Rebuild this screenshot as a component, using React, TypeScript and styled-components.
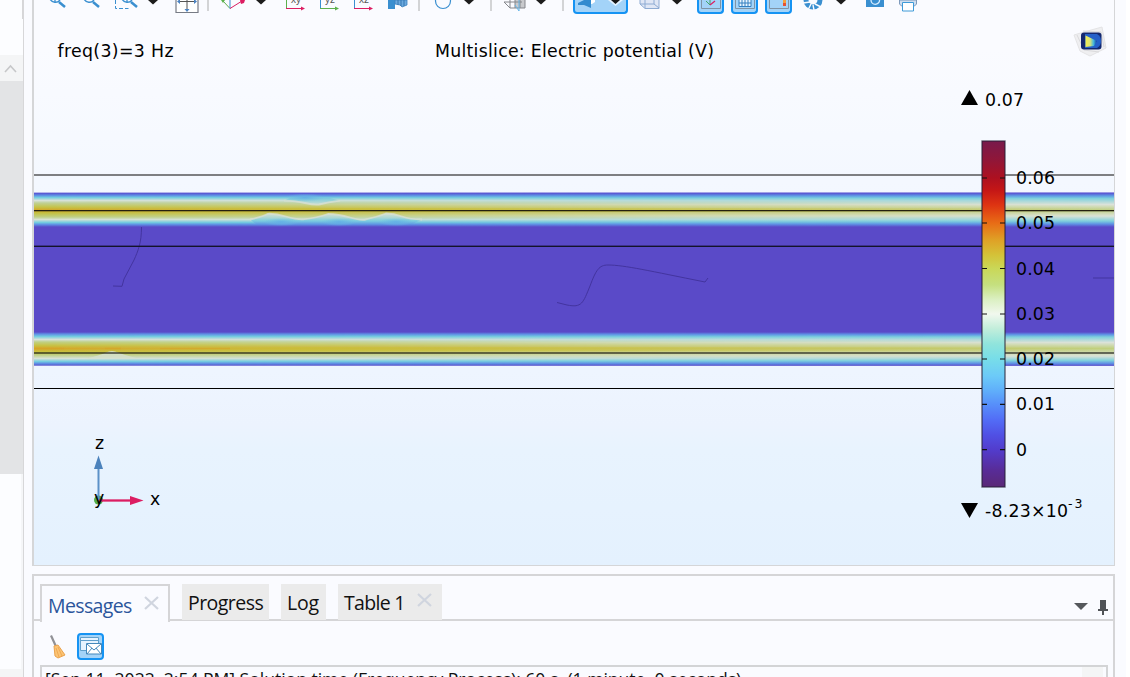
import React from "react";
import styled, { createGlobalStyle } from "styled-components";

const GlobalStyle = createGlobalStyle`
  * { box-sizing: border-box; }
  html, body { margin: 0; background: #fff; overflow: hidden; }
  svg { display: block; }
`;

const Shell = styled.div`
  width: 1126px;
  height: 677px;
  display: flex;
  overflow: hidden;
  background: #fafbff;
  font-family: "Open Sans", "Noto Sans", sans-serif;
`;

const SideRail = styled.aside`
  width: 24px;
  flex: none;
  display: flex;
  flex-direction: column;
  background: #fcfdff;
  border-right: 1px solid #d7d7d9;
`;
const RailTop = styled.div`
  height: 55px;
  display: flex;
  justify-content: flex-end;
`;
const RailEdge = styled.div`
  width: 1px;
  height: 19px;
  background: #d6d6d8;
`;
const RailButton = styled.div`
  height: 26px;
  background: #f4f5f6;
  padding: 9px 0 0 4px;
`;
const RailThumb = styled.div`
  height: 393px;
  background: #e3e4e6;
`;
const RailTrack = styled.div`
  flex: 1;
  border-right: 2px solid #f5f6f8;
`;
const RailFoot = styled.div`
  height: 8px;
  background: #f4f5f6;
`;

const Main = styled.main`
  width: 1083px;
  margin-left: 8px;
  display: flex;
  flex-direction: column;
`;
const Graphics = styled.section`
  height: 566px;
  flex: none;
  border: solid #d5d6d8;
  border-width: 0 1px 1px 2px;
  background: linear-gradient(#fafbff 0, #fafbff 49px, #f4f8ff 180px, #eef5ff 370px, #ecf3fe 425px, #e8f3fe 450px, #e4f1fe 565px);
`;
const Toolbar = styled.div`
  height: 15px;
  display: flex;
  align-items: flex-start;
  overflow: hidden;
`;
const Slot = styled.div<{ $w: number; $gap: number }>`
  width: ${(p) => p.$w}px;
  height: 14px;
  margin-left: ${(p) => p.$gap}px;
  flex: none;
`;
const Divider = styled(Slot)`
  height: 11px;
  background: #d3d4d6;
`;
const ActiveSlot = styled(Slot)`
  border: 2px solid #1593f3;
  border-top: 0;
  border-radius: 0 0 4px 4px;
  background: #a3d3f8;
`;

const Messages = styled.section`
  height: 120px;
  flex: none;
  margin-top: 8px;
  border: 2px solid #d5d5d7;
  border-bottom: 0;
`;
const TabBar = styled.div`
  height: 45px;
  padding: 8px 0 0 6px;
  display: flex;
  align-items: flex-start;
  background: linear-gradient(#d5d5d7, #d5d5d7) 0 100% / 100% 2px no-repeat;
`;
const Tab = styled.div<{ $w: number; $spacing?: number; $selected?: boolean }>`
  width: ${(p) => p.$w}px;
  height: ${(p) => (p.$selected ? 38 : 36)}px;
  margin-right: 12px;
  padding: ${(p) => (p.$selected ? "6px 9px 0 6px" : "5px 10px 0 6px")};
  border: ${(p) => (p.$selected ? "2px solid #d5d5d7" : "0")};
  border-bottom: 0;
  display: flex;
  justify-content: space-between;
  background: ${(p) => (p.$selected ? "#fafbff" : "#ebebeb")};
  color: ${(p) => (p.$selected ? "#2b559b" : "#111")};
  font-size: 19.5px;
  line-height: 28px;
  letter-spacing: ${(p) => p.$spacing ?? 0}px;
  white-space: nowrap;
`;
const PanelControls = styled.div`
  margin: 14px 4px 0 auto;
  display: flex;
  gap: 9px;
`;
const MessageTools = styled.div`
  height: 44px;
  padding: 12px 0 0 15px;
  display: flex;
  gap: 11px;
`;
const MailToggle = styled.div`
  width: 27px;
  height: 27px;
  border: 2px solid #1593f3;
  border-radius: 4px;
  background: #a3d3f8;
`;
const LogBox = styled.div`
  width: 1068px;
  height: 30px;
  margin-left: 6px;
  border: 2px solid #d3d4d6;
  display: flex;
  justify-content: space-between;
`;
const LogLine = styled.div`
  padding-left: 3px;
  font-size: 17.6px;
  line-height: 25px;
  letter-spacing: -0.03px;
  white-space: nowrap;
  color: #111;
`;
const LogScroll = styled.div`
  width: 21px;
  margin-right: 3px;
  background: #f4f5f6;
`;

const blue = "#3a8fd0";

const Caret = () => (
  <svg width="10" height="14"><path d="M0 0h10L5 4.5z" fill="#1c1c1c" /></svg>
);
const Magnifier = ({ mark, x = 0 }: { mark?: boolean; x?: number }) => (
  <g transform={`translate(${x} 0)`} fill="none" stroke={blue}>
    <path d="M2 -1A6 6 0 0 0 12 0" strokeWidth="1.4" />
    <path d="M11 2l6 5" strokeWidth="2.5" />
    {mark && <path d="M7 0v2" strokeWidth="1.3" />}
  </g>
);
const PlaneIcon = ({ label, up, across }: { label: string; up: string; across: string }) => (
  <svg width="21" height="14">
    <path d="M1.5 0v8.5" stroke={up} />
    <path d="M1 8.5h16" stroke={across} />
    <path d="M16 6.5l4 2-4 2z" fill={across} />
    <text x="6" y="3" fontFamily="Liberation Sans" fontSize="10" fill="#555">{label}</text>
  </svg>
);
const SolidIcon = () => (
  <svg width="21" height="14">
    <path d="M1 0h7v9H1z" fill={blue} />
    <path d="M8 0h12v5l-5 2-2-2-5-1z" fill="#6ba9df" stroke="#3a80be" strokeWidth=".8" />
    <path d="M11 0v5M14 0v6M17 0v6" stroke="#3576b0" />
  </svg>
);

const ToolbarRow = () => (
  <Toolbar>
    <Slot $w={19} $gap={14}><svg width="19" height="14"><Magnifier mark /></svg></Slot>
    <Slot $w={19} $gap={15}><svg width="19" height="14"><Magnifier /></svg></Slot>
    <Slot $w={24} $gap={13}>
      <svg width="24" height="14">
        <path d="M1.5 0v8.5h13" fill="none" stroke={blue} strokeDasharray="4 2" />
        <Magnifier mark x={6} />
      </svg>
    </Slot>
    <Slot $w={10} $gap={10}><Caret /></Slot>
    <Slot $w={24} $gap={17}>
      <svg width="24" height="14">
        <path d="M1 0v12.500h22V0" fill="#fff" stroke="#777b85" strokeWidth="1.2" />
        <path d="M3 1.500h18M12 0v10" stroke="#555" />
        <path d="M12 12l-2.500-3h5zM2 1.500L5 -1v5zM22 1.500L19 -1v5z" fill="#4b83c3" />
      </svg>
    </Slot>
    <Divider $w={2} $gap={8} />
    <Slot $w={26} $gap={11}>
      <svg width="26" height="14">
        <path d="M3 1l7 7.500" stroke="#5cb04c" />
        <path d="M10 8.500V0" stroke={blue} />
        <path d="M10 8.500L22 1" stroke="#dc1d62" />
        <path d="M1 0h4L3 3z" fill="#5cb04c" />
        <path d="M20 0h5l-1 3-3 1z" fill="#dc1d62" />
      </svg>
    </Slot>
    <Slot $w={10} $gap={10}><Caret /></Slot>
    <Slot $w={21} $gap={19}><PlaneIcon label="xy" up="#5cb04c" across="#dc1d62" /></Slot>
    <Slot $w={21} $gap={13}><PlaneIcon label="yz" up={blue} across="#5cb04c" /></Slot>
    <Slot $w={21} $gap={13}><PlaneIcon label="xz" up={blue} across="#dc1d62" /></Slot>
    <Slot $w={21} $gap={13}><SolidIcon /></Slot>
    <Divider $w={2} $gap={10} />
    <Slot $w={18} $gap={14}>
      <svg width="18" height="14"><circle cx="9" cy="1" r="7.500" fill="none" stroke={blue} strokeWidth="1.2" /></svg>
    </Slot>
    <Slot $w={10} $gap={12}><Caret /></Slot>
    <Divider $w={2} $gap={16} />
    <Slot $w={24} $gap={11}>
      <svg width="24" height="14">
        <path d="M12 0h10v8H12z" fill="#c9cacd" />
        <path d="M1 2l6 6h15V0M1 2h18M7 0v8M12 0v8M17 0v8" fill="none" stroke="#85878c" />
        <path d="M12 5l4 6V0" fill="none" stroke="#65b5e8" />
      </svg>
    </Slot>
    <Slot $w={10} $gap={9}><Caret /></Slot>
    <Divider $w={2} $gap={16} />
    <ActiveSlot $w={55} $gap={9}>
      <svg width="51" height="12">
        <path d="M3 3l6-3h7v8L9 5H3z" fill="#328bcf" />
        <path d="M16 0h4v2l-3 2h-1z" fill="#fff" />
        <path d="M33 0h15l-7.500 6z" fill="#e4f3ff" />
        <path d="M36 0h9l-4.500 4z" fill="#161616" />
      </svg>
    </ActiveSlot>
    <Slot $w={23} $gap={10}>
      <svg width="23" height="14">
        <path d="M2 0v4l5 4.500h14V0z" fill="#dfe6f5" />
        <path d="M2 0v4l5 4.500h14V0M7 0v8M2 4h14l5 4M16 0v4" fill="none" stroke="#8eabd3" />
      </svg>
    </Slot>
    <Slot $w={10} $gap={11}><Caret /></Slot>
    <ActiveSlot $w={27} $gap={15}>
      <svg width="23" height="12">
        <path d="M2.500 0v8.500h19V0" fill="none" stroke="#7e93a6" />
        <path d="M7 1l4 4V0" fill="none" stroke="#40a66b" />
        <path d="M11 5l5-4" stroke="#dc1d62" strokeWidth="1.300" />
      </svg>
    </ActiveSlot>
    <ActiveSlot $w={27} $gap={7}>
      <svg width="23" height="12">
        <path d="M2.500 0v8.500h19V0" fill="none" stroke="#7e93a6" />
        <path d="M6 0h12v6H6z" fill="#e8f5ff" />
        <path d="M6 0v6.500h12V0M9 0v6M12 0v6M15 0v6M6 3h12" fill="none" stroke="#337fc0" />
      </svg>
    </ActiveSlot>
    <ActiveSlot $w={27} $gap={7}>
      <svg width="23" height="12">
        <path d="M2.500 0v8.500h19V0" fill="none" stroke="#7e93a6" />
        <path d="M16 0h3v3h-3z" fill="#f5a13a" />
        <path d="M16 3h3v3h-3z" fill="#e45235" />
      </svg>
    </ActiveSlot>
    <Slot $w={20} $gap={11}>
      <svg width="20" height="14">
        <path d="M10 0m-7 0a7 7 0 0 0 14 0" fill="none" stroke={blue} strokeWidth="5" />
        <path d="M0 3l7-1M5 10l3-6M11 10l-1-5M18 7l-6-3" stroke="#fafbff" strokeWidth="1.400" />
      </svg>
    </Slot>
    <Slot $w={10} $gap={13}><Caret /></Slot>
    <Slot $w={18} $gap={20}>
      <svg width="18" height="14">
        <path d="M0 0h18v7H0z" fill={blue} />
        <path d="M5 0a4.300 4.300 0 0 0 8.600 0" fill="none" stroke="#d6edff" strokeWidth="1.300" />
      </svg>
    </Slot>
    <Slot $w={20} $gap={14}>
      <svg width="20" height="14">
        <path d="M1.500 0v4l2 2h13l2-2V0z" fill="#cfdeef" stroke="#7e9abc" />
        <path d="M4.500 2.500h11v8.500h-11z" fill="#fff" stroke="#3e9ad8" />
      </svg>
    </Slot>
  </Toolbar>
);

type Stop = [number, string];
const Gradient = ({ id, y1, y2, stops }: { id: string; y1: number; y2: number; stops: Stop[] }) => (
  <linearGradient id={id} gradientUnits="userSpaceOnUse" x1="0" x2="0" y1={y1} y2={y2}>
    {stops.map(([y, c]) => <stop key={y} offset={(y - y1) / (y2 - y1)} stopColor={c} />)}
  </linearGradient>
);

const upperWarm: Stop[] = [
  [192, "#8f88df"], [193.5, "#5a5cd4"], [195.5, "#5f93e4"], [197.5, "#74cde0"], [200.5, "#d8e2d8"],
  [203, "#bfd094"], [207, "#c5c44a"], [210, "#d4a626"], [213, "#c5c040"], [217, "#bfd084"],
  [219.5, "#d8e2d4"], [222.5, "#74cde0"], [224.5, "#5f93e4"], [227, "#5a4ac8"],
];
const upperCool: Stop[] = [
  [192, "#8f88df"], [193.5, "#5a5cd4"], [196, "#5f9fe4"], [198.5, "#7ed0dc"], [204.5, "#dbe2da"],
  [210, "#bfcf84"], [216, "#dbe2d8"], [221, "#7ed0dc"], [224, "#5f93e4"], [227, "#5a4ac8"],
];
const lowerWarm: Stop[] = [
  [332, "#5a4ac8"], [334, "#5f8fe4"], [336.5, "#74cde0"], [339.5, "#d8e2d8"], [342, "#bfd084"],
  [345.5, "#c8c244"], [348.5, "#d6a628"], [352, "#c6c23e"], [355, "#bfd084"], [358.5, "#d8e2d8"],
  [361.5, "#74cde0"], [363.5, "#5f8fe4"], [366, "#5a4ac8"],
];
const lowerCool: Stop[] = [
  [332, "#5a4ac8"], [334.5, "#5f93e4"], [337, "#7ed0dc"], [342.5, "#dbe2da"], [348.5, "#c0d080"],
  [356, "#dbe2d8"], [360.5, "#7ed0dc"], [363.5, "#5f8fe4"], [366, "#5a4ac8"],
];
const rainbow: Stop[] = [
  [141, "#781a4c"], [160, "#901638"], [178, "#ad1020"], [190, "#c41616"], [205, "#de3412"], [223, "#e86c16"],
  [240, "#dfa126"], [255, "#d4c238"], [268, "#cad756"], [285, "#c5e080"], [300, "#dcf0c4"], [314, "#f1f8ee"],
  [328, "#c4eedb"], [344, "#90e4dc"], [358, "#78dee8"], [376, "#6ccaf8"], [390, "#60b0fa"], [404, "#5790fa"],
  [420, "#526cf6"], [435, "#5050e4"], [450, "#523ccc"], [470, "#582c98"], [488, "#5a2874"],
];
const ticks: [string, number][] = [
  ["0.06", 178], ["0.05", 223], ["0.04", 268.5], ["0.03", 314], ["0.02", 359], ["0.01", 404.3], ["0", 449.7],
];
const wave = "M250 219.500Q262 217 268 213.800Q276 213.500 286 216.500T303 219.300Q317 218 328 214Q338 214 350 217.500T366 219.300Q377 217 386 213.500Q394 213.500 402 216.500T422 219.500";
const dipCurve = "M284 200.700Q296 201 305 203T319 204.500Q328 202.500 340 200.700";

const Plot = () => (
  <svg width="1080" height="550" viewBox="34 15 1080 550" fontFamily="DejaVu Sans" fontSize="17.33" fill="#000">
    <defs>
      <Gradient id="upperWarm" y1={192} y2={227} stops={upperWarm} />
      <Gradient id="upperCool" y1={192} y2={227} stops={upperCool} />
      <Gradient id="lowerWarm" y1={332} y2={366} stops={lowerWarm} />
      <Gradient id="lowerCool" y1={332} y2={366} stops={lowerCool} />
      <Gradient id="rainbow" y1={141} y2={488} stops={rainbow} />
      <Gradient id="dip" y1={196} y2={205} stops={[[196, "#66b4e2"], [199, "#84cedc"], [205, "#cfdfd0"]]} />
      <Gradient id="hump" y1={213} y2={224} stops={[[213, "#d5e0d4"], [217, "#b4d9d2"], [221, "#7accdf"], [224, "#609be4"]]} />
      <radialGradient id="coldSpot">
        <stop offset="0" stopColor="#62aee6" stopOpacity=".9" />
        <stop offset="1" stopColor="#6dbde2" stopOpacity="0" />
      </radialGradient>
      <linearGradient id="cooling">
        <stop offset="0" stopColor="#fff" stopOpacity="0" />
        <stop offset=".3" stopColor="#fff" stopOpacity=".26" />
        <stop offset=".6" stopColor="#fff" stopOpacity=".65" />
        <stop offset="1" stopColor="#fff" />
      </linearGradient>
      <mask id="coolMask" maskUnits="userSpaceOnUse" x="34" y="190" width="1080" height="180">
        <rect x="34" y="190" width="1080" height="180" fill="url(#cooling)" />
      </mask>
      <linearGradient id="yellowing">
        <stop offset="0" stopColor="#c8c238" stopOpacity="0" />
        <stop offset=".25" stopColor="#c8c238" />
        <stop offset=".5" stopColor="#c8c640" stopOpacity=".7" />
        <stop offset="1" stopColor="#c8c640" stopOpacity="0" />
      </linearGradient>
      <linearGradient id="logoFace">
        <stop offset="0" stopColor="#f4ed4c" />
        <stop offset=".4" stopColor="#dbe477" />
        <stop offset=".7" stopColor="#43b6dc" />
        <stop offset="1" stopColor="#123c9c" />
      </linearGradient>
    </defs>

    <text x="57.500" y="57" textLength="116">freq(3)=3 Hz</text>
    <text x="435" y="57" textLength="279">Multislice: Electric potential (V)</text>

    <path d="M1074 35l10-3 18-5 4 21-16 8-10-5z" fill="#efeff1" stroke="#e4e4e6" />
    <path d="M1077 35l7 15 15 2M1083 31l18 1 3 15" fill="none" stroke="#dadadc" />
    <rect x="1081" y="32.500" width="20.500" height="17" rx="3" fill="#14286f" />
    <path d="M1085 34h12q4 2 4 7t-4 7h-12z" fill="#2560c8" />
    <path d="M1085.500 35.500L1097 41l-3 5-8.500 1z" fill="url(#logoFace)" />

    <rect x="34" y="226" width="1080" height="107" fill="#5a4ac8" />
    <rect x="34" y="192.500" width="1080" height="34.500" fill="url(#upperWarm)" />
    <rect x="34" y="332" width="1080" height="33.700" fill="url(#lowerWarm)" />
    <g mask="url(#coolMask)">
      <rect x="34" y="192.500" width="1080" height="34.500" fill="url(#upperCool)" />
      <rect x="34" y="332" width="1080" height="33.700" fill="url(#lowerCool)" />
    </g>
    <rect x="34" y="208" width="1080" height="4" fill="url(#yellowing)" opacity=".7" />
    <rect x="34" y="347" width="1080" height="4" fill="url(#yellowing)" opacity=".7" />

    <path d={`${dipCurve}L330 198H290z`} fill="url(#dip)" />
    <ellipse cx="305" cy="197.500" rx="20" ry="4" fill="url(#coldSpot)" />
    <path d={dipCurve} fill="none" stroke="#d8e0d2" strokeWidth="1.800" opacity=".8" />
    <path d={`${wave}L412 224H256z`} fill="url(#hump)" />
    {[281, 339, 396].map((x) => (
      <ellipse key={x} cx={x} cy="222" rx="18" ry="4" fill="url(#coldSpot)" />
    ))}
    <path d={wave} fill="none" stroke="#d8e0d2" strokeWidth="1.800" opacity=".8" />
    <path d="M86 358.500Q98 356 106 352.500Q112 349.500 118 352.500Q124 355 138 358.500z" fill="#d6e0ce" opacity=".85" />
    <path d="M34 348.500h30M105 348.500h16M160 348.500h70" stroke="#d6a428" strokeWidth="1.500" opacity=".6" />

    <g fill="none" stroke="#43349f" strokeWidth="1">
      <path d="M141.500 227C141.500 243 138 251 134 260L124 279 122 286.300 113 286" />
      <path d="M557 302.500L567 305C582 308 583 303 590 286 596 270 599 265 608 265 624 265 650 271 705 282L708 278" />
      <path d="M1093 278h21" />
    </g>

    <rect x="34" y="174" width="1080" height="2" fill="#7e7f82" />
    <rect x="34" y="210" width="1080" height="1" fill="#242010" />
    <rect x="34" y="211" width="1080" height="1" fill="#242010" opacity=".3" />
    <rect x="34" y="245" width="1080" height="1" fill="#201a50" opacity=".5" />
    <rect x="34" y="246" width="1080" height="1" fill="#14142a" />
    <rect x="34" y="352" width="1080" height="2" fill="#101010" opacity=".57" />
    <rect x="34" y="388" width="1080" height="1" fill="#000" />

    <rect x="982" y="141" width="23" height="346" fill="url(#rainbow)" stroke="#262035" strokeOpacity=".75" strokeWidth="1.300" />
    {ticks.map(([label, y]) => (
      <g key={label}>
        <path d={`M982 ${y}h5M1000 ${y}h5`} stroke="#111" strokeWidth="1.200" />
        <text x="1016" y={y + 6} textLength={label.length > 1 ? 39 : 11}>{label}</text>
      </g>
    ))}
    <path d="M961 105l8.500-15 8.500 15z" />
    <text x="985" y="106" textLength="39">0.07</text>
    <path d="M961 503h17l-8.500 15z" />
    <text x="985" y="517" textLength="83">-8.23×10</text>
    <text x="1068" y="508" fontSize="12.500" textLength="14.500">-3</text>

    <circle cx="98.500" cy="500" r="4.500" fill="#53ac49" />
    <path d="M98.500 500V468" stroke="#5b91c8" strokeWidth="2" />
    <path d="M94 469l4.500-13.500L103 469z" fill="#4b82bc" />
    <path d="M99 500.500h32" stroke="#dc1d62" strokeWidth="2.300" />
    <path d="M130 496l13.500 4.500L130 505z" fill="#dc1d62" />
    <text x="95" y="449">z</text>
    <text x="150" y="505">x</text>
    <text x="94" y="504">y</text>
  </svg>
);

const CloseMark = () => (
  <svg width="15" height="26"><path d="M1 5l13 12M14 5L1 17" stroke="#d0d5df" strokeWidth="2.200" /></svg>
);

const App = () => (
  <>
    <GlobalStyle />
    <Shell>
      <SideRail>
        <RailTop><RailEdge /></RailTop>
        <RailButton>
          <svg width="13" height="9"><path d="M1 8l5.500-6L12 8" fill="none" stroke="#c6c7c9" strokeWidth="1.600" /></svg>
        </RailButton>
        <RailThumb />
        <RailTrack />
        <RailFoot />
      </SideRail>
      <Main>
        <Graphics>
          <ToolbarRow />
          <Plot />
        </Graphics>
        <Messages>
          <TabBar>
            <Tab $w={130} $selected $spacing={-0.62}>Messages<CloseMark /></Tab>
            <Tab $w={87} $spacing={-0.55}>Progress</Tab>
            <Tab $w={45} $spacing={-0.2}>Log</Tab>
            <Tab $w={104} $spacing={-0.7}>Table 1<CloseMark /></Tab>
            <PanelControls>
              <svg width="14" height="20"><path d="M0 5h14l-7 7z" fill="#55585c" /></svg>
              <svg width="12" height="20"><path d="M3 2h6v9h2v2H7v4H5v-4H1v-2h2z" fill="#505357" /></svg>
            </PanelControls>
          </TabBar>
          <MessageTools>
            <svg width="17" height="26" viewBox="0 0 17 26">
              <path d="M1 3l2-1 5 11-2 1z" fill="#909196" />
              <path d="M5 13l4-1 7 10-7 3-3-2z" fill="#fbc475" stroke="#eaa24c" />
              <path d="M7 15l3 9M9 14l4 9" stroke="#f1a952" />
            </svg>
            <MailToggle>
              <svg width="23" height="23">
                <path d="M1.500 2.500h18v13h-18z" fill="#e5f3ff" stroke="#5f9fcc" />
                <path d="M2 5.500h17" stroke="#5f9fcc" />
                <path d="M7.500 8.500h15v10.500h-15z" fill="#fff" stroke="#4488bb" />
                <path d="M8 9l7 6 7-6M8 19l5-6M22 19l-5-6" fill="none" stroke="#4488bb" />
              </svg>
            </MailToggle>
          </MessageTools>
          <LogBox>
            <LogLine>[Sep 11, 2022, 2:54 PM] Solution time (Frequency Process): 60 s. (1 minute, 0 seconds)</LogLine>
            <LogScroll />
          </LogBox>
        </Messages>
      </Main>
    </Shell>
  </>
);

export default App;
